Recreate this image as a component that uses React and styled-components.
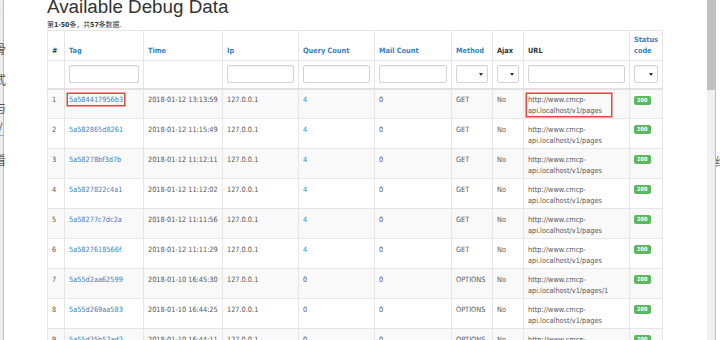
import React from "react";
import styled, { createGlobalStyle } from "styled-components";

const GlobalStyle = createGlobalStyle`
  html, body { margin: 0; padding: 0; width: 720px; height: 340px; overflow: hidden; background: #fff; }
  #root { width: 720px; height: 340px; }
`;

const Frame = styled.div`
  display: flex;
  width: 720px;
  height: 340px;
  overflow: hidden;
  position: relative;
  font-family: "DejaVu Sans Condensed", "DejaVu Sans", "Noto Sans CJK SC", sans-serif;
  font-stretch: condensed;
`;

const LeftEdge = styled.div`
  flex: none;
  width: 3px;
  background: #ececec;
  border-right: 1px solid #a8c7e6;
  position: relative;
  z-index: 2;
`;

const EdgeGlyph = styled.span`
  position: absolute;
  left: ${(p) => p.$x}px;
  top: ${(p) => p.$y}px;
  font-family: "Noto Sans CJK SC", sans-serif;
  font-size: 12px;
  line-height: 12px;
  color: #3a3a3a;
  opacity: 0.85;
  white-space: nowrap;
`;

const EdgeRule = styled.span`
  position: absolute;
  left: 0;
  top: 135px;
  width: 4px;
  height: 1px;
  background: #7fb0e0;
`;

const Main = styled.div`
  flex: 1;
  min-width: 0;
  padding-left: 43px;
  color: #333;
`;

const Title = styled.h1`
  margin: -3px 0 0;
  font-family: "Liberation Sans", Arial, sans-serif;
  font-weight: 400;
  font-size: 18.8px;
  line-height: 19px;
  color: #333;
  white-space: nowrap;
`;

const Summary = styled.div`
  margin-top: 4px;
  font-size: 6.9px;
  line-height: 10px;
  color: #333;
  white-space: nowrap;
  b { font-weight: bold; }
`;

const Table = styled.table`
  border-collapse: collapse;
  table-layout: fixed;
  width: 616px;
  border: 1px solid #e2e2e2;
  font-size: 7.3px;
  color: #555;
`;

const HeadRow = styled.tr`
  height: 30px;
`;

const Th = styled.th`
  vertical-align: bottom;
  text-align: left;
  padding: 0 4px 4px;
  border: 1px solid #e6e6e6;
  font-weight: bold;
  line-height: 10.5px;
  color: ${(p) => (p.$link ? "#3a7fc1" : "#333")};
`;

const FilterRow = styled.tr`
  height: 28px;
`;

const FilterCell = styled.td`
  padding: 0 4px;
  border: 1px solid #e6e6e6;
  border-bottom: 2px solid #e2e2e2;
  vertical-align: middle;
`;

const TextInput = styled.div`
  box-sizing: border-box;
  height: 18px;
  border: 1px solid #d4d4d4;
  border-radius: 2px;
  background: #fff;
  box-shadow: inset 0 1px 1px rgba(0, 0, 0, 0.05);
`;

const SelectBox = styled(TextInput)`
  display: flex;
  align-items: center;
  justify-content: flex-end;
  padding-right: 4px;
`;

const Caret = styled.span`
  width: 0;
  height: 0;
  border-left: 2px solid transparent;
  border-right: 2px solid transparent;
  border-top: 3px solid #333;
`;

const Body = styled.tbody`
  tr:nth-child(odd) { background: #f9f9f9; }
`;

const Row = styled.tr`
  height: 30px;
`;

const Td = styled.td`
  vertical-align: top;
  padding: 4.5px 4px 0;
  border: 1px solid #e6e6e6;
  line-height: 11px;
  white-space: nowrap;
  overflow: hidden;
  color: ${(p) => (p.$link ? "#3a7fc1" : "#555555")};
`;

const LinkText = styled.span`
  color: #3a7fc1;
`;

const Marked = styled.span`
  display: inline-block;
  vertical-align: top;
  padding: 0 1px;
  margin-left: -1px;
  width: ${(p) => (p.$w ? `${p.$w}px` : "auto")};
  box-shadow: 0 0 0 1.5px #e8443f;
`;

const Badge = styled.span`
  display: inline-block;
  vertical-align: top;
  margin-top: 1.5px;
  padding: 0 3px;
  height: 9px;
  line-height: 9px;
  border-radius: 2px;
  background: #5cb85c;
  color: #fff;
  font-weight: bold;
  font-size: 5.6px;
`;

const Scroll = styled.div`
  flex: none;
  width: 8px;
  background: #f0f0f0;
  display: flex;
  flex-direction: column;
`;

const Thumb = styled.div`
  height: 90px;
  background: #c1c1c1;
`;

const RightEdge = styled.div`
  flex: none;
  width: 4px;
  border-left: 1px solid #a8c7e6;
  background: #fff;
  position: relative;
  overflow: hidden;
`;

const cols = [17, 79, 79, 76, 76, 77, 41, 31, 106, 33];

const headers = [
  { t: "#" },
  { t: "Tag", link: true },
  { t: "Time", link: true },
  { t: "Ip", link: true },
  { t: "Query Count", link: true },
  { t: "Mail Count", link: true },
  { t: "Method", link: true },
  { t: "Ajax" },
  { t: "URL" },
  { t: "Status code", link: true },
];

const filters = ["none", "input", "none", "input", "input", "input", "select", "select", "input", "select"];

const rows = [
  ["5a584417956b3", "2018-01-12 13:13:59", 4, "GET", "pages"],
  ["5a582865d8261", "2018-01-12 11:15:49", 4, "GET", "pages"],
  ["5a58278bf3d7b", "2018-01-12 11:12:11", 4, "GET", "pages"],
  ["5a5827822c4a1", "2018-01-12 11:12:02", 4, "GET", "pages"],
  ["5a58277c7dc2a", "2018-01-12 11:11:56", 4, "GET", "pages"],
  ["5a5827618566f", "2018-01-12 11:11:29", 4, "GET", "pages"],
  ["5a55d2aa62599", "2018-01-10 16:45:30", 0, "OPTIONS", "pages/1"],
  ["5a55d269aa583", "2018-01-10 16:44:25", 0, "OPTIONS", "pages"],
  ["5a55d25b52ad2", "2018-01-10 16:44:11", 0, "OPTIONS", "pages"],
];

function UrlText({ path }) {
  return (
    <>
      http://www.cmcp-
      <br />
      api.localhost/v1/{path}
    </>
  );
}

export default function App() {
  return (
    <>
      <GlobalStyle />
      <Frame>
        <LeftEdge>
          <EdgeGlyph $x={-7} $y={8}>o</EdgeGlyph>
          <EdgeGlyph $x={-6} $y={43}>骨</EdgeGlyph>
          <EdgeGlyph $x={-6} $y={74}>式</EdgeGlyph>
          <EdgeGlyph $x={-6} $y={102}>与</EdgeGlyph>
          <EdgeGlyph $x={-2} $y={121}>/</EdgeGlyph>
          <EdgeRule />
          <EdgeGlyph $x={-6} $y={154}>看</EdgeGlyph>
        </LeftEdge>
        <Main>
          <Title>Available Debug Data</Title>
          <Summary>
            第<b>1-50</b>条，共<b>57</b>条数据.
          </Summary>
          <Table>
            <colgroup>
              {cols.map((w, i) => (
                <col key={i} style={{ width: w }} />
              ))}
            </colgroup>
            <thead>
              <HeadRow>
                {headers.map((h) => (
                  <Th key={h.t} $link={h.link}>
                    {h.t}
                  </Th>
                ))}
              </HeadRow>
              <FilterRow>
                {filters.map((f, i) => (
                  <FilterCell key={i}>
                    {f === "input" && <TextInput />}
                    {f === "select" && (
                      <SelectBox>
                        <Caret />
                      </SelectBox>
                    )}
                  </FilterCell>
                ))}
              </FilterRow>
            </thead>
            <Body>
              {rows.map((r, i) => {
                const first = i === 0;
                return (
                  <Row key={r[0]}>
                    <Td>{i + 1}</Td>
                    <Td $link>{first ? <Marked>{r[0]}</Marked> : r[0]}</Td>
                    <Td>{r[1]}</Td>
                    <Td>127.0.0.1</Td>
                    <Td>{r[2] > 0 ? <LinkText>{r[2]}</LinkText> : r[2]}</Td>
                    <Td>0</Td>
                    <Td>{r[3]}</Td>
                    <Td>No</Td>
                    <Td>
                      {first ? (
                        <Marked $w={82}>
                          <UrlText path={r[4]} />
                        </Marked>
                      ) : (
                        <UrlText path={r[4]} />
                      )}
                    </Td>
                    <Td>
                      <Badge>200</Badge>
                    </Td>
                  </Row>
                );
              })}
            </Body>
          </Table>
        </Main>
        <Scroll>
          <Thumb />
        </Scroll>
        <RightEdge>
          <EdgeGlyph $x={-1} $y={156}>绪</EdgeGlyph>
        </RightEdge>
      </Frame>
    </>
  );
}
